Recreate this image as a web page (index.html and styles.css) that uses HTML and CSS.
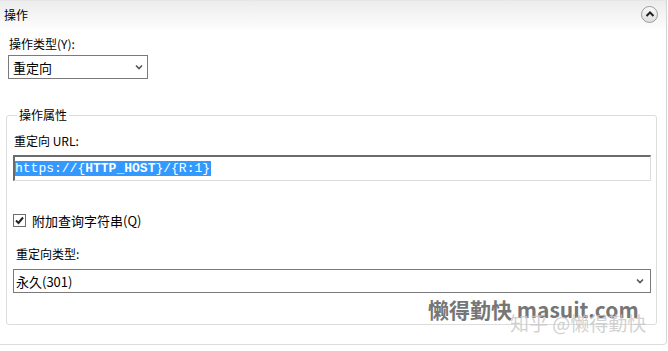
FILE: index.html
```html
<!DOCTYPE html>
<html lang="zh-CN">
<head>
    <meta charset="UTF-8">
    <title>操作</title>
    <link rel="stylesheet" href="styles.css">
</head>
<body>

<div class="panel">
    <!-- Header -->
    <div class="panel-head">
        <span class="head-title">操作</span>
        <span class="collapse-btn">
            <svg width="10" height="8" viewBox="0 0 10 8"><path d="M1.5 6 L5 2.5 L8.5 6" fill="none" stroke="#222" stroke-width="2"/></svg>
        </span>
    </div>

    <div class="panel-body">
        <label class="field-label">操作类型(Y):</label>
        <div class="select small-select">
            <span>重定向</span>
            <svg class="arrow" width="8" height="6" viewBox="0 0 8 6"><path d="M1 1.5 L4 4.5 L7 1.5" fill="none" stroke="#555" stroke-width="1.6"/></svg>
        </div>

        <fieldset class="props">
            <legend>操作属性</legend>

            <label class="field-label url-label">重定向 URL:</label>
            <div class="url-input">
                <span class="selected">https://{<b>HTTP_HOST</b>}/{R:1}</span>
            </div>

            <label class="check-row">
                <span class="checkbox">
                    <svg width="11" height="11" viewBox="0 0 11 11"><path d="M2 5.5 L4.5 8 L9 2.5" fill="none" stroke="#222" stroke-width="2"/></svg>
                </span>
                附加查询字符串(Q)
            </label>

            <label class="field-label type-label">重定向类型:</label>
            <div class="select wide-select">
                <span>永久(301)</span>
                <svg class="arrow" width="8" height="6" viewBox="0 0 8 6"><path d="M1 1.5 L4 4.5 L7 1.5" fill="none" stroke="#555" stroke-width="1.6"/></svg>
            </div>
        </fieldset>
    </div>

    <!-- watermarks -->
    <div class="mark-site">懒得勤快 masuit.com</div>
    <div class="mark-zhihu">知乎 @懒得勤快</div>
</div>

</body>
</html>
```

FILE: styles.css
```css
body {
    margin: 0;
    background-color: #fff;
    font-family: "Noto Sans CJK SC", "Liberation Sans", sans-serif;
    font-size: 12px;
    color: #000;
}
.panel {
    position: relative;
    width: 666px;
    height: 344px;
    border-right: 1px solid #d6d6d6;
    border-bottom: 1px solid #dcdcdc;
    border-bottom-right-radius: 4px;
    overflow: hidden;
}
.panel-head {
    height: 30px;
    border-top: 1px solid #e6e6e6;
    background: linear-gradient(#ececec, #fdfdfd);
    display: flex;
    align-items: center;
    justify-content: space-between;
    padding: 0 8px 0 4px;
    box-sizing: border-box;
}
.head-title {
    line-height: 16px;
    margin-top: -2px;
}
.collapse-btn {
    width: 15px;
    height: 15px;
    border: 1px solid #9a9a9a;
    border-radius: 50%;
    background: linear-gradient(#fafafa, #dedede);
    display: flex;
    align-items: center;
    justify-content: center;
    margin-top: -3px;
}
.panel-body {
    padding: 6px 0 0 9px;
}
.field-label {
    display: block;
    line-height: 16px;
}
.select {
    display: flex;
    align-items: center;
    justify-content: space-between;
    box-sizing: border-box;
    height: 24px;
    border: 1px solid #7a7a7a;
    background-color: #fff;
}
.small-select {
    width: 140px;
    margin: 3px 0 0 -1px;
    padding: 0 4px 0 4px;
    font-size: 13px;
}
.props {
    margin: 28px 0 0 -3px;
    width: 651px;
    height: 218px;
    box-sizing: border-box;
    border: 1px solid #dcdcdc;
    border-radius: 3px;
    padding: 10px 5px 0 6px;
}
.props legend {
    padding: 0 2px;
    margin-left: 4px;
    line-height: 16px;
}
.url-label {
    margin-left: 1px;
}
.url-input {
    margin-top: 6px;
    width: 638px;
    height: 26px;
    box-sizing: border-box;
    border-top: 2px solid #6b6b6b;
    border-left: 2px solid #6b6b6b;
    border-right: 1px solid #dcdcdc;
    border-bottom: 1px solid #dcdcdc;
    padding: 1px 0 0 0;
}
.selected {
    display: inline-block;
    background-color: #3399ff;
    color: #fff;
    font-family: "Liberation Mono", monospace;
    font-size: 13px;
    line-height: 15px;
    padding-right: 1px;
}
.check-row {
    display: flex;
    align-items: center;
    gap: 6px;
    margin-top: 30px;
    font-size: 13px;
}
.checkbox {
    width: 11px;
    height: 11px;
    border: 1px solid #6e6e6e;
    background: #fff;
    display: flex;
}
.type-label {
    margin: 16px 0 0 3px;
}
.wide-select {
    width: 638px;
    margin-top: 7px;
    padding: 0 6px 0 2px;
    font-size: 13px;
}
.mark-site {
    position: absolute;
    left: 428px;
    top: 294px;
    font-size: 21px;
    color: #767676;
    font-weight: bold;
    font-family: "Noto Sans CJK SC", "Liberation Sans", sans-serif;
}
.mark-zhihu {
    position: absolute;
    left: 510px;
    top: 309px;
    font-size: 19px;
    color: rgba(200, 200, 200, 0.85);
    font-family: "Noto Sans CJK SC", sans-serif;
}
```
